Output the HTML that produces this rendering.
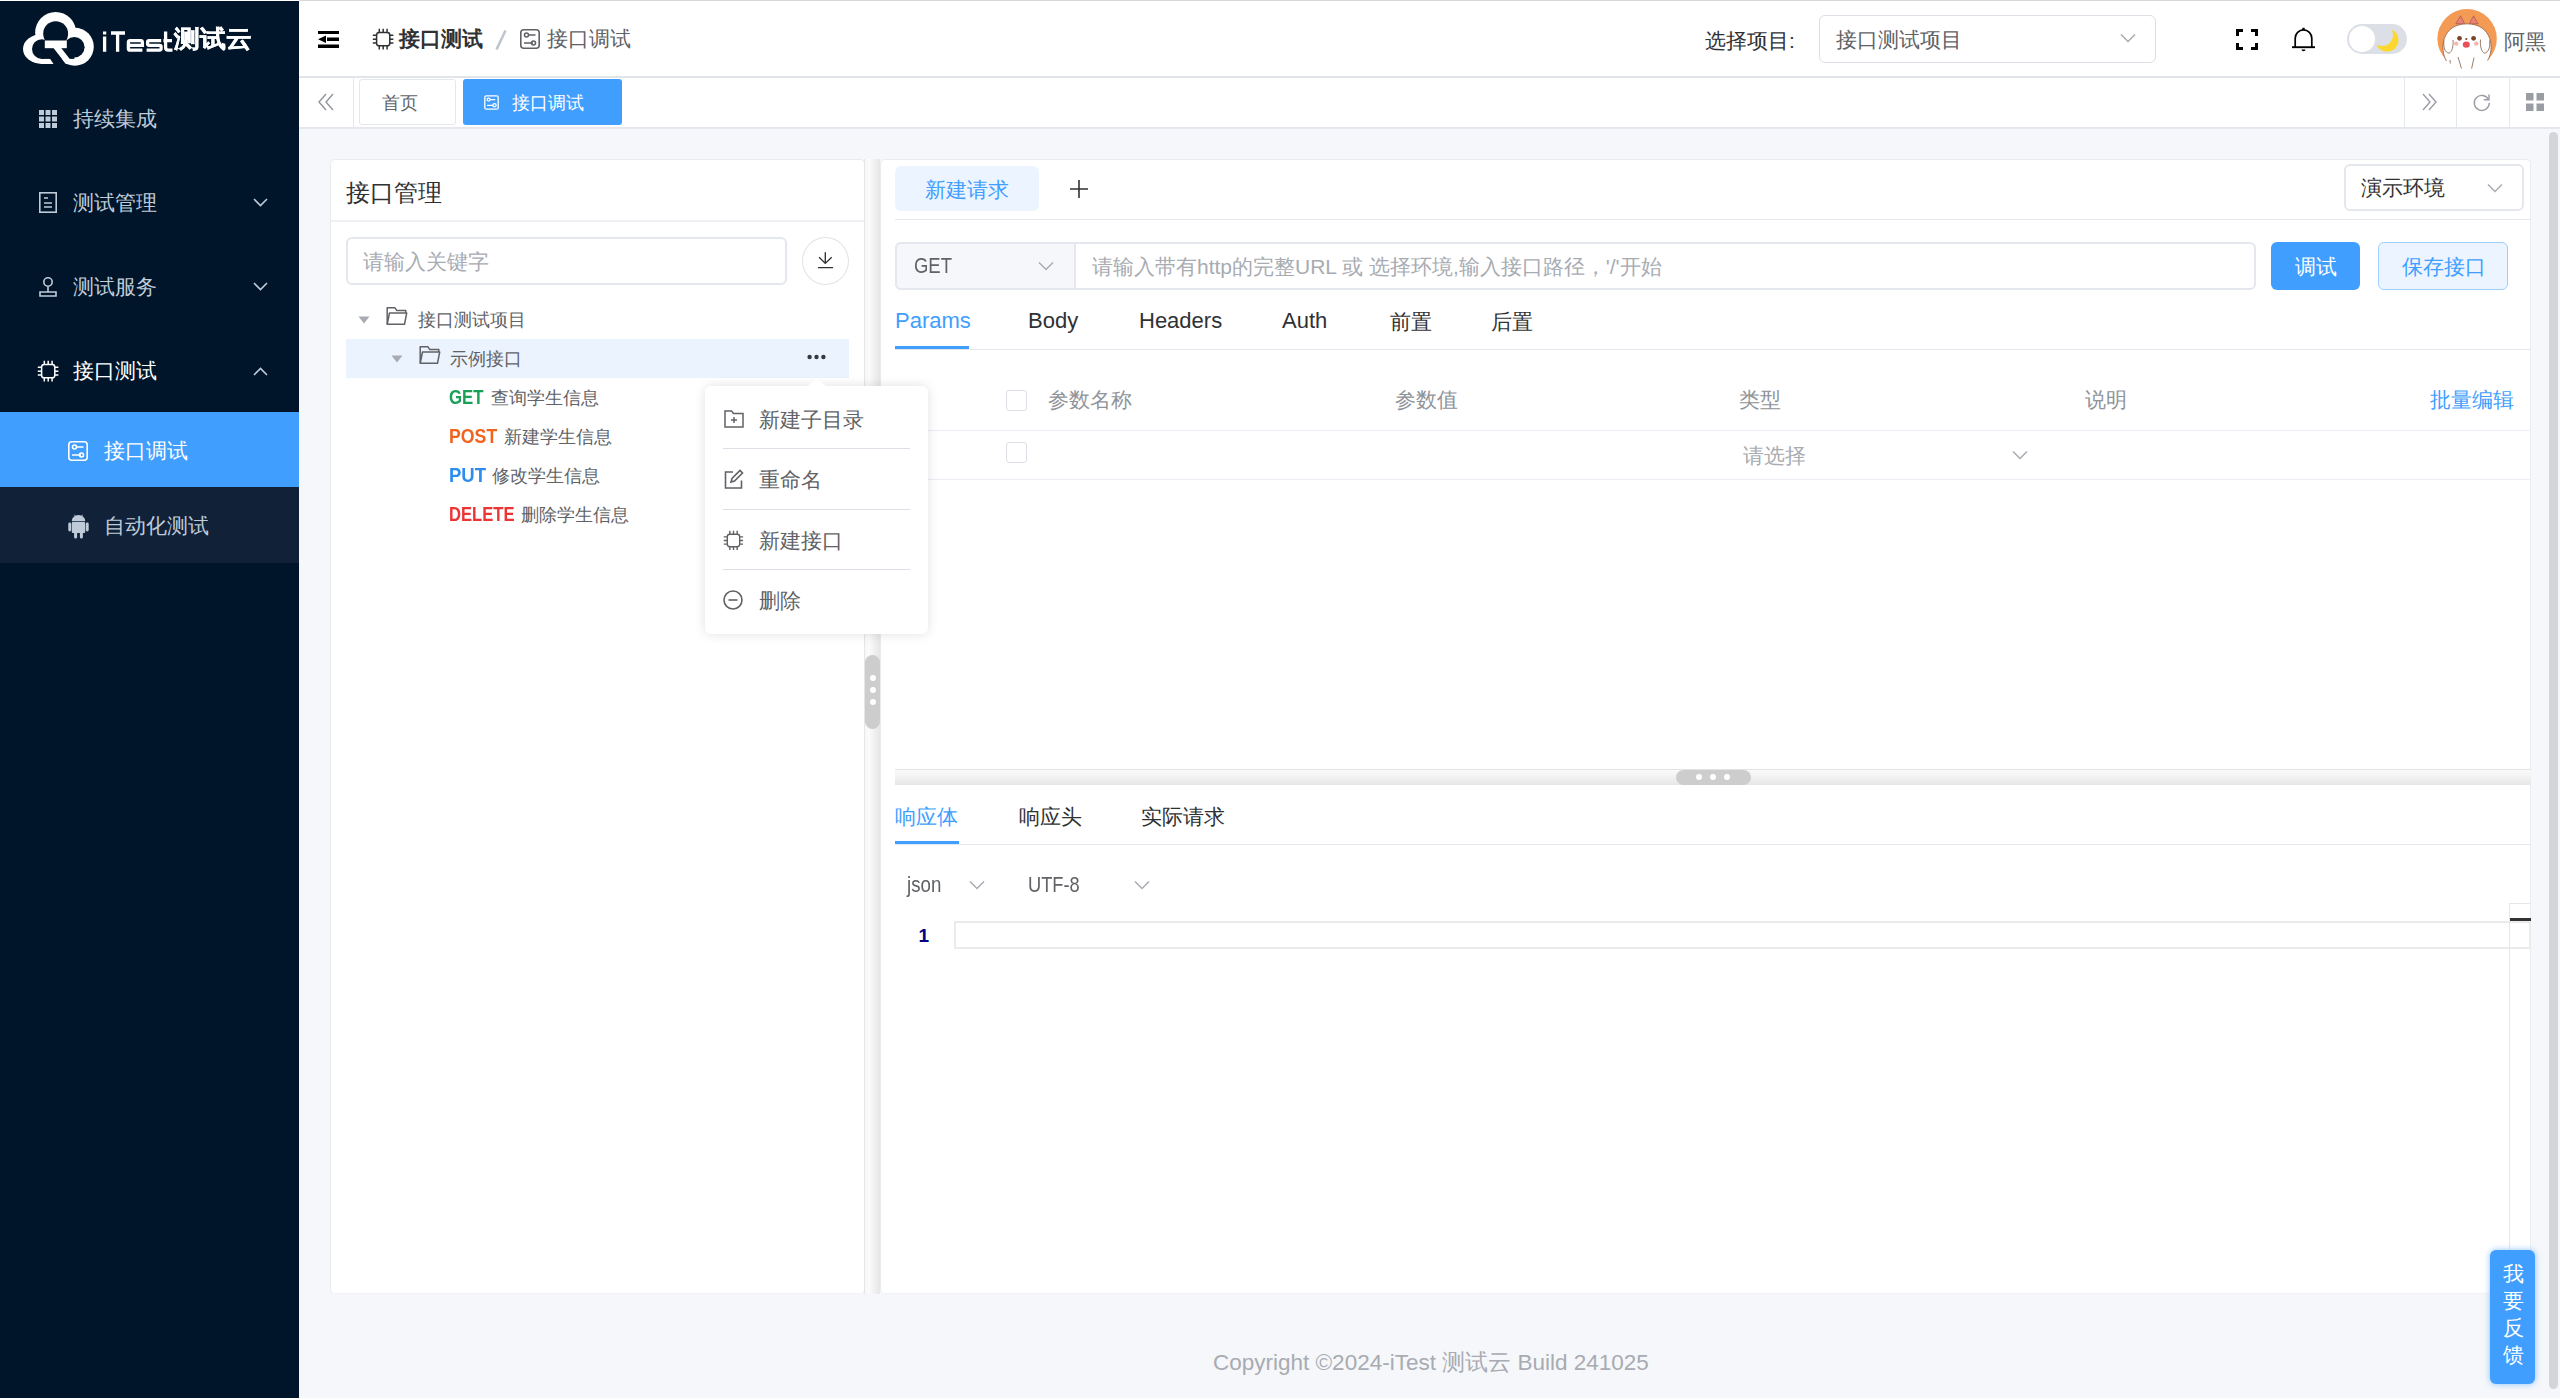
<!DOCTYPE html>
<html><head><meta charset="utf-8">
<style>
*{margin:0;padding:0;box-sizing:border-box}
html,body{width:2560px;height:1398px;overflow:hidden;background:#f5f7fa;font-family:"Liberation Sans",sans-serif;color:#303133}
.abs{position:absolute}
.t{position:absolute;white-space:nowrap;line-height:1}
svg{position:absolute;overflow:visible}
#side{position:absolute;left:0;top:1px;width:299px;height:1397px;background:#001529}
#topline{position:absolute;left:0;top:0;width:2560px;height:1px;background:#fff}
#topline2{position:absolute;left:299px;top:0;width:2261px;height:1px;background:#d8d8d8}
#header{position:absolute;left:299px;top:1px;width:2261px;height:77px;background:#fff;border-bottom:2px solid #e1e4e9}
#tags{position:absolute;left:299px;top:78px;width:2261px;height:51px;background:#fff;border-bottom:2px solid #e4e7ed}
.card{position:absolute;background:#fff;border-radius:5px;border:1px solid #e9ebef;border-bottom-color:#f2f3f6}
.menu{color:#bfcbd9;font-size:21px}
</style></head><body>
<div id="topline"></div><div id="topline2"></div>
<div id="side">
  <!-- logo -->
  <svg style="left:0;top:-1px" width="260" height="70" viewBox="0 0 260 70">
    <defs><mask id="lg">
      <circle cx="55.65" cy="32.5" r="20.5" fill="#fff"/>
      <ellipse cx="41.85" cy="49" rx="18.85" ry="15" fill="#fff"/>
      <circle cx="74.8" cy="46.8" r="19" fill="#fff"/>
      <rect x="41" y="50" width="34" height="14" fill="#fff"/>
      <circle cx="55.65" cy="33.65" r="12.45" fill="#000"/>
      <circle cx="41.85" cy="49.05" r="9.85" fill="#000"/>
      <circle cx="74.3" cy="47.3" r="10.3" fill="#000"/>
      <rect x="41.85" y="40.5" width="32.5" height="18.4" fill="#000"/>
      <path d="M49.2 57.5 L61 57.5 L68 67 L55.5 67 Z" fill="#000"/>
      <rect x="44.8" y="40.5" width="22" height="7.7" fill="#fff"/>
      <path d="M53.5 48 L61.2 48 L72.5 62.5 L64.8 62.5 Z" fill="#fff"/>
    </mask></defs>
    <rect x="0" y="0" width="100" height="70" fill="#fff" mask="url(#lg)"/>
    <g fill="none" stroke="#fff" stroke-width="3.3">
      <path d="M104.6 36.5V51.7M111 33H125M117.6 33V51.7"/>
      <path d="M128.4 45.3H142.4V42.3Q142.4 40.6 140.7 40.6H130.1Q128.4 40.6 128.4 42.3V48.4Q128.4 50.1 130.1 50.1H142.4"/>
      <path d="M161.2 40.6H149.1Q147.6 40.6 147.6 42.1V43.8Q147.6 45.3 149.1 45.3H159.6Q161.1 45.3 161.1 46.8V48.6Q161.1 50.1 159.6 50.1H146.6"/>
      <path d="M165.6 31.5V47.5Q165.6 50.1 168.2 50.1H172.5M163.4 40.6H172"/>
    </g>
    <rect x="102.95" y="31.5" width="3.3" height="3" fill="#fff"/>
  </svg>
  <div class="t" style="left:174px;top:26px;font-size:26px;font-weight:bold;color:#fff;-webkit-text-stroke:0.5px #fff;transform:scaleY(0.93);transform-origin:0 0">测试云</div>
  <!-- menu 1 -->
  <svg style="left:39px;top:109px" width="18" height="18" viewBox="0 0 18 18" fill="#bfcbd9">
    <rect x="0" y="0" width="5" height="5"/><rect x="6.5" y="0" width="5" height="5"/><rect x="13" y="0" width="5" height="5"/>
    <rect x="0" y="6.5" width="5" height="5"/><rect x="6.5" y="6.5" width="5" height="5"/><rect x="13" y="6.5" width="5" height="5"/>
    <rect x="0" y="13" width="5" height="5"/><rect x="6.5" y="13" width="5" height="5"/><rect x="13" y="13" width="5" height="5"/>
  </svg>
  <div class="t menu" style="left:73px;top:107px">持续集成</div>
  <!-- menu 2 -->
  <svg style="left:39px;top:191px" width="18" height="21" viewBox="0 0 18 21" fill="none" stroke="#bfcbd9" stroke-width="1.6">
    <rect x="0.8" y="0.8" width="16.4" height="19.4"/><path d="M5 6h4M5 11h8M5 15h8"/>
  </svg>
  <div class="t menu" style="left:73px;top:191px">测试管理</div>
  <svg style="left:253px;top:197px" width="15" height="9" viewBox="0 0 15 9" fill="none" stroke="#bfcbd9" stroke-width="1.6"><path d="M1 1l6.5 6.5L14 1"/></svg>
  <!-- menu 3 -->
  <svg style="left:39px;top:276px" width="18" height="20" viewBox="0 0 18 20" fill="none" stroke="#bfcbd9" stroke-width="1.6">
    <circle cx="9" cy="5" r="4.2"/><path d="M9 9.2v5M1 15h16v4H1z"/>
  </svg>
  <div class="t menu" style="left:73px;top:275px">测试服务</div>
  <svg style="left:253px;top:281px" width="15" height="9" viewBox="0 0 15 9" fill="none" stroke="#bfcbd9" stroke-width="1.6"><path d="M1 1l6.5 6.5L14 1"/></svg>
  <!-- menu 4 -->
  <svg style="left:36.5px;top:358.5px" width="22.4" height="22.4" viewBox="0 0 22.4 22.4" fill="none" stroke="#fff" stroke-width="1.5"><rect x="4.6" y="4.6" width="13.2" height="13.2" rx="2.6"/><path d="M7.3 0.8v3.6M11.2 0.8v3.6M15.1 0.8v3.6M7.3 17.8v3.6M11.2 17.8v3.6M15.1 17.8v3.6M0.8 7.3h3.6M0.8 11.2h3.6M0.8 15.1h3.6M17.8 7.3h3.6M17.8 11.2h3.6M17.8 15.1h3.6"/></svg>
  <div class="t menu" style="left:73px;top:359px;color:#fff">接口测试</div>
  <svg style="left:253px;top:366px" width="15" height="9" viewBox="0 0 15 9" fill="none" stroke="#bfcbd9" stroke-width="1.6"><path d="M1 8l6.5-6.5L14 8"/></svg>
  <!-- submenu -->
  <div class="abs" style="left:0;top:411px;width:299px;height:75px;background:#409eff"></div>
  <svg style="left:68px;top:439.5px" width="20" height="20" viewBox="0 0 20 20" fill="none" stroke="#fff" stroke-width="1.6">
    <rect x="0.8" y="0.8" width="18.4" height="18.4" rx="3"/><circle cx="6.5" cy="6" r="2"/><path d="M8.5 6h7M4 14h9"/><circle cx="13.5" cy="14" r="2"/>
  </svg>
  <div class="t menu" style="left:104px;top:439px;color:#fff">接口调试</div>
  <div class="abs" style="left:0;top:486px;width:299px;height:75.5px;background:#112238"></div>
  <svg style="left:67.5px;top:512.5px" width="21" height="25" viewBox="0 0 21 25" fill="#bfcbd9">
    <path d="M3.8 7.2 A6.7 6.2 0 0 1 17.2 7.2 Z"/><rect x="3.8" y="7.9" width="13.4" height="11.2" rx="1"/><rect x="0.3" y="8.5" width="2.9" height="9" rx="1.45"/><rect x="17.8" y="8.5" width="2.9" height="9" rx="1.45"/><rect x="6.1" y="17" width="3" height="7.6" rx="1.5"/><rect x="11.9" y="17" width="3" height="7.6" rx="1.5"/>
    <path d="M6.5 0.8l1.4 2.4M14.5 0.8l-1.4 2.4" stroke="#bfcbd9" stroke-width="0.9"/>
  </svg>
  <div class="t menu" style="left:104px;top:514px">自动化测试</div>
</div>
<div id="header"></div>
<!-- header content -->
<svg style="left:318px;top:31px" width="21" height="17" viewBox="0 0 21 17" fill="#000">
  <rect x="0" y="0" width="21" height="3"/><rect x="9" y="6.5" width="12" height="3.5"/><rect x="0" y="13.5" width="21" height="3.5"/><path d="M0 8.25 L8 4.5 V12 Z"/>
</svg>
<svg style="left:371.5px;top:27.5px" width="22.4" height="22.4" viewBox="0 0 22.4 22.4" fill="none" stroke="#303133" stroke-width="1.5"><rect x="4.6" y="4.6" width="13.2" height="13.2" rx="2.6"/><path d="M7.3 0.8v3.6M11.2 0.8v3.6M15.1 0.8v3.6M7.3 17.8v3.6M11.2 17.8v3.6M15.1 17.8v3.6M0.8 7.3h3.6M0.8 11.2h3.6M0.8 15.1h3.6M17.8 7.3h3.6M17.8 11.2h3.6M17.8 15.1h3.6"/></svg>
<div class="t" style="left:399px;top:28px;font-size:21px;font-weight:bold;color:#303133">接口测试</div>
<svg style="left:494px;top:29px" width="14" height="22" viewBox="0 0 14 22"><path d="M11.5 1.5 L2.5 20.5" stroke="#c0c4cc" stroke-width="2.6"/></svg>
<svg style="left:520px;top:29px" width="20" height="20" viewBox="0 0 20 20" fill="none" stroke="#606266" stroke-width="1.6">
  <rect x="0.8" y="0.8" width="18.4" height="18.4" rx="3"/><circle cx="6.5" cy="6" r="2"/><path d="M8.5 6h7M4 14h9"/><circle cx="13.5" cy="14" r="2"/>
</svg>
<div class="t" style="left:547px;top:28px;font-size:21px;color:#606266">接口调试</div>
<div class="t" style="left:1705px;top:30px;font-size:21px;color:#303133">选择项目:</div>
<div class="abs" style="left:1819px;top:15px;width:337px;height:48px;border:1px solid #dcdfe6;border-radius:6px;background:#fff"></div>
<div class="t" style="left:1836px;top:29px;font-size:21px;color:#606266">接口测试项目</div>
<svg style="left:2120px;top:33px" width="16" height="10" viewBox="0 0 16 10" fill="none" stroke="#a8abb2" stroke-width="1.5"><path d="M1 1.5l7 7 7-7"/></svg>
<svg style="left:2235.5px;top:29px" width="22" height="21" viewBox="0 0 22 21" fill="none" stroke="#000" stroke-width="3">
  <path d="M1.5 7V1.5H7M15 1.5h5.5V7M20.5 14v5.5H15M7 19.5H1.5V14"/>
</svg>
<svg style="left:2291px;top:26px" width="25" height="27" viewBox="0 0 25 27" fill="none" stroke="#000" stroke-width="1.7">
  <path d="M4.2 21.2V12.2A8.3 8.3 0 0 1 20.8 12.2V21.2"/><path d="M1 21.2H24" stroke-width="1.9"/><rect x="11.3" y="1.8" width="2.4" height="2.4" fill="#000" stroke="none"/><path d="M10.5 23.4A2 1.8 0 0 0 14.5 23.4Z" fill="#000" stroke="none"/>
</svg>
<div class="abs" style="left:2347px;top:24px;width:60px;height:30px;border-radius:15px;background:#dcdfe6"></div>
<div class="abs" style="left:2349px;top:26px;width:26px;height:26px;border-radius:13px;background:#fff"></div>
<svg style="left:2374px;top:27px" width="26" height="26" viewBox="0 0 26 26"><defs><mask id="moon"><rect width="26" height="26" fill="#fff"/><circle cx="8" cy="8" r="11" fill="#000"/></mask></defs><circle cx="13" cy="13" r="11.5" fill="#fcd82f" mask="url(#moon)"/></svg>
<!-- avatar -->
<svg style="left:2430px;top:5px" width="70" height="70" viewBox="0 0 70 70">
  <circle cx="37.1" cy="33.7" r="29.7" fill="#f39a55"/>
  <path d="M16.5 56 C9.5 45 11 19 37 18.8 C63 19 64.5 45 57.6 55.5 L56 66 L18 66 Z" fill="#fff"/>
  <path d="M16.5 56 C9.5 45 11 19 37 18.8 C63 19 64.5 45 57.6 55.5" fill="none" stroke="#9c6a4c" stroke-width="0.9"/>
  <path d="M25.8 18.8 L30.5 10.8 L34.6 18.6 Z M39.4 18.6 L43.6 10.8 L48 18.8 Z" fill="#f07f7a" stroke="#a8604a" stroke-width="0.8"/>
  <circle cx="29.5" cy="33.3" r="2.4" fill="#7a4528"/><circle cx="43.6" cy="33.3" r="2.4" fill="#7a4528"/>
  <circle cx="36.3" cy="34" r="1.1" fill="#7a4528"/>
  <ellipse cx="36.3" cy="39.6" rx="3.5" ry="3.2" fill="#e9505c"/>
  <circle cx="26.3" cy="38.6" r="2.2" fill="#f9b6ad"/><circle cx="46.3" cy="38.6" r="2.2" fill="#f9b6ad"/>
  <g fill="none" stroke="#8f6e5c" stroke-width="0.9">
    <path d="M23 35 C23.5 42 22 47 19 48.2 C15 47.5 13 42 14 35.5"/>
    <path d="M50.5 34.5 C50 42 51.5 47 54.5 48.2 C58.5 47.5 60.5 42 59.5 35.5"/>
    <path d="M28 52 L31.5 63.6 M44 52.6 L41.6 63.6 M20 55 L20.4 58.5"/>
  </g>
</svg>
<div class="t" style="left:2504px;top:31px;font-size:21px;color:#606266">阿黑</div>
<div id="tags"></div>
<!-- tags content -->
<svg style="left:318px;top:93px" width="16" height="18" viewBox="0 0 16 18" fill="none" stroke="#909399" stroke-width="1.4"><path d="M8 1 L1 9 L8 17 M15 1 L8 9 L15 17"/></svg>
<div class="abs" style="left:353px;top:78px;width:1px;height:50px;background:#e4e7ed"></div>
<div class="abs" style="left:359px;top:79px;width:97px;height:46px;border:1px solid #e4e7ed;border-radius:3px;background:#fff"></div>
<div class="t" style="left:382px;top:94px;font-size:18px;color:#606266">首页</div>
<div class="abs" style="left:463px;top:79px;width:159px;height:46px;border-radius:3px;background:#409eff"></div>
<svg style="left:483.5px;top:94.5px" width="15" height="15" viewBox="0 0 15 15" fill="none" stroke="#fff" stroke-width="1.3"><rect x="0.8" y="0.8" width="13.4" height="13.4" rx="1.5"/><circle cx="4.6" cy="4.6" r="1.5"/><path d="M6.1 4.6h5.2M3 10.3h6.2"/><circle cx="10.5" cy="10.3" r="1.6"/></svg>
<div class="t" style="left:512px;top:94px;font-size:18px;color:#fff">接口调试</div>
<div class="abs" style="left:2404px;top:78px;width:1px;height:50px;background:#e4e7ed"></div>
<div class="abs" style="left:2456px;top:78px;width:1px;height:50px;background:#e4e7ed"></div>
<div class="abs" style="left:2509px;top:78px;width:1px;height:50px;background:#e4e7ed"></div>
<svg style="left:2422px;top:93px" width="16" height="18" viewBox="0 0 16 18" fill="none" stroke="#9a9da4" stroke-width="1.4"><path d="M1 1 L8 9 L1 17 M7 1 L14 9 L7 17"/></svg>
<svg style="left:2473px;top:93px" width="18" height="18" viewBox="0 0 18 18" fill="none" stroke="#9a9da4" stroke-width="1.4"><path d="M15.5 6.5 A7.5 7.5 0 1 0 16.3 10"/><path d="M16 1.5 V6.8 H10.8"/></svg>
<svg style="left:2526px;top:93px" width="18" height="18" viewBox="0 0 18 18" fill="#9a9da4"><rect x="0" y="0" width="7.5" height="7.5"/><rect x="10.5" y="0" width="7.5" height="7.5"/><rect x="0" y="10.5" width="7.5" height="7.5"/><rect x="10.5" y="10.5" width="7.5" height="7.5"/></svg>
<!-- scrollbar -->
<div class="abs" style="left:2549px;top:132px;width:9px;height:1257px;border-radius:4.5px;background:#d3d5d9"></div>
<div class="card" style="left:330px;top:159px;width:535px;height:1135px"></div>
<!-- left card content -->
<div class="t" style="left:346px;top:180.5px;font-size:24px;color:#303133">接口管理</div>
<div class="abs" style="left:331px;top:220px;width:533px;height:2px;background:#eef0f3"></div>
<div class="abs" style="left:346px;top:237px;width:441px;height:48px;border:2px solid #e4e7ed;border-radius:6px;background:#fff"></div>
<div class="t" style="left:363px;top:251px;font-size:21px;color:#a8abb2">请输入关键字</div>
<div class="abs" style="left:802px;top:237px;width:47px;height:48px;border:1.5px solid #e3e3e3;border-radius:50%;background:#fff"></div>
<svg style="left:817px;top:251px" width="17" height="18" viewBox="0 0 17 18" fill="none" stroke="#303133" stroke-width="1.35"><path d="M8.3 1.3V12.6M2.1 6.2L8.3 12.4L14.7 6.2M1 16.6H16.1"/></svg>
<!-- tree -->
<svg style="left:357.5px;top:316px" width="12" height="8" viewBox="0 0 12 8"><path d="M0.5 0.5h11L6 7.5z" fill="#a8abb2"/></svg>
<svg style="left:386px;top:307px" width="22" height="19" viewBox="0 0 22 19" fill="none" stroke="#606266" stroke-width="1.5" stroke-linejoin="round"><path d="M1.2 17.3V0.8H9L10.8 3.6H19.8V6"/><path d="M1.2 17.3L3.5 6H20.7L18.5 17.3Z"/></svg>
<div class="t" style="left:418px;top:311px;font-size:18px;color:#606266">接口测试项目</div>
<div class="abs" style="left:346px;top:339px;width:503px;height:39px;background:#ebf3fe"></div>
<svg style="left:390.5px;top:355px" width="12" height="8" viewBox="0 0 12 8"><path d="M0.5 0.5h11L6 7.5z" fill="#a8abb2"/></svg>
<svg style="left:419px;top:346px" width="22" height="19" viewBox="0 0 22 19" fill="none" stroke="#606266" stroke-width="1.5" stroke-linejoin="round"><path d="M1.2 17.3V0.8H9L10.8 3.6H19.8V6"/><path d="M1.2 17.3L3.5 6H20.7L18.5 17.3Z"/></svg>
<div class="t" style="left:450px;top:350px;font-size:18px;color:#606266">示例接口</div>
<svg style="left:807px;top:354px" width="20" height="6" viewBox="0 0 20 6" fill="#35393f"><circle cx="2.6" cy="3" r="2.2"/><circle cx="9.5" cy="3" r="2.2"/><circle cx="16.4" cy="3" r="2.2"/></svg>
<div class="t" style="left:448.5px;top:387.5px;font-size:19.4px;font-weight:bold;color:#18a058;transform:scaleX(0.865);transform-origin:0 0">GET</div>
<div class="t" style="left:491px;top:389px;font-size:18px;color:#606266">查询学生信息</div>
<div class="t" style="left:448.5px;top:426.5px;font-size:19.4px;font-weight:bold;color:#f0641e;transform:scaleX(0.913);transform-origin:0 0">POST</div>
<div class="t" style="left:504px;top:428px;font-size:18px;color:#606266">新建学生信息</div>
<div class="t" style="left:448.5px;top:465.5px;font-size:19.4px;font-weight:bold;color:#2d8cf0;transform:scaleX(0.955);transform-origin:0 0">PUT</div>
<div class="t" style="left:492px;top:467px;font-size:18px;color:#606266">修改学生信息</div>
<div class="t" style="left:448.5px;top:504.5px;font-size:19.4px;font-weight:bold;color:#ed3434;transform:scaleX(0.856);transform-origin:0 0">DELETE</div>
<div class="t" style="left:521px;top:506px;font-size:18px;color:#606266">删除学生信息</div>
<!-- vertical splitter -->
<div class="abs" style="left:864px;top:159px;width:16px;height:1135px;background:linear-gradient(to right,#f6f6f6,#fbfbfb 30%,#e6e6e6)"></div>
<div class="abs" style="left:864px;top:159px;width:1px;height:1135px;background:#e6e6e6"></div>
<div class="abs" style="left:864.5px;top:654.5px;width:15px;height:74px;border-radius:7.5px;background:#cdcdcd"></div>
<div class="abs" style="left:869.5px;top:675px;width:6px;height:6px;border-radius:3px;background:#fff"></div>
<div class="abs" style="left:869.5px;top:686.6px;width:6px;height:6px;border-radius:3px;background:#fff"></div>
<div class="abs" style="left:869.5px;top:698.8px;width:6px;height:6px;border-radius:3px;background:#fff"></div>
<div class="card" style="left:880px;top:159px;width:1651px;height:1135px"></div>
<!-- right card content -->
<div class="abs" style="left:895px;top:166px;width:144px;height:45px;border-radius:6px;background:#ecf5ff"></div>
<div class="t" style="left:925px;top:179px;font-size:21px;color:#409eff">新建请求</div>
<svg style="left:1070px;top:180px" width="18" height="18" viewBox="0 0 18 18" fill="none" stroke="#303133" stroke-width="1.6"><path d="M9 0v18M0 9h18"/></svg>
<div class="abs" style="left:2344px;top:164px;width:180px;height:47px;border:2px solid #e4e7ed;border-radius:6px;background:#fff"></div>
<div class="t" style="left:2361px;top:177px;font-size:21px;color:#303133">演示环境</div>
<svg style="left:2487px;top:183px" width="16" height="10" viewBox="0 0 16 10" fill="none" stroke="#a8abb2" stroke-width="1.5"><path d="M1 1.5l7 7 7-7"/></svg>
<div class="abs" style="left:895px;top:219px;width:1636px;height:1px;background:#e4e7ed"></div>
<!-- url row -->
<div class="abs" style="left:895px;top:242px;width:1361px;height:48px;border:2px solid #e4e7ed;border-radius:6px;background:#fff"></div>
<div class="abs" style="left:895px;top:242px;width:181px;height:48px;border:2px solid #e4e7ed;border-radius:6px 0 0 6px;background:#f5f7fa"></div>
<div class="t" style="left:913.5px;top:254.5px;font-size:22px;color:#606266;transform:scaleX(0.84);transform-origin:0 0">GET</div>
<svg style="left:1038px;top:261px" width="16" height="10" viewBox="0 0 16 10" fill="none" stroke="#a8abb2" stroke-width="1.5"><path d="M1 1.5l7 7 7-7"/></svg>
<div class="t" style="left:1092px;top:256px;font-size:21px;color:#a8abb2">请输入带有http的完整URL 或 选择环境,输入接口路径，'/'开始</div>
<div class="abs" style="left:2271px;top:242px;width:89px;height:48px;border-radius:6px;background:#409eff"></div>
<div class="t" style="left:2295px;top:256px;font-size:21px;color:#fff">调试</div>
<div class="abs" style="left:2378px;top:242px;width:130px;height:48px;border:1px solid #a0cfff;border-radius:6px;background:#ecf5ff"></div>
<div class="t" style="left:2402px;top:256px;font-size:21px;color:#409eff">保存接口</div>
<!-- request tabs -->
<div class="t" style="left:895px;top:310px;font-size:22px;color:#409eff">Params</div>
<div class="t" style="left:1028px;top:310px;font-size:22px;color:#303133">Body</div>
<div class="t" style="left:1139px;top:310px;font-size:22px;color:#303133">Headers</div>
<div class="t" style="left:1282px;top:310px;font-size:22px;color:#303133">Auth</div>
<div class="t" style="left:1390px;top:311px;font-size:21px;color:#303133">前置</div>
<div class="t" style="left:1491px;top:311px;font-size:21px;color:#303133">后置</div>
<div class="abs" style="left:895px;top:348.5px;width:1636px;height:1.5px;background:#e4e7ed"></div>
<div class="abs" style="left:895px;top:346px;width:74px;height:3px;background:#409eff"></div>
<!-- params table -->
<div class="abs" style="left:1006px;top:390px;width:21px;height:21px;border:1px solid #dcdfe6;border-radius:3px;background:#fff"></div>
<div class="t" style="left:1048px;top:389px;font-size:21px;color:#909399">参数名称</div>
<div class="t" style="left:1395px;top:389px;font-size:21px;color:#909399">参数值</div>
<div class="t" style="left:1739px;top:389px;font-size:21px;color:#909399">类型</div>
<div class="t" style="left:2085px;top:389px;font-size:21px;color:#909399">说明</div>
<div class="t" style="left:2430px;top:389px;font-size:21px;color:#409eff">批量编辑</div>
<div class="abs" style="left:895px;top:430px;width:1636px;height:1px;background:#ebeef5"></div>
<div class="abs" style="left:1006px;top:442px;width:21px;height:21px;border:1px solid #dcdfe6;border-radius:3px;background:#fff"></div>
<div class="t" style="left:1743px;top:445px;font-size:21px;color:#a8abb2">请选择</div>
<svg style="left:2012px;top:450px" width="16" height="10" viewBox="0 0 16 10" fill="none" stroke="#a8abb2" stroke-width="1.5"><path d="M1 1.5l7 7 7-7"/></svg>
<div class="abs" style="left:895px;top:479px;width:1636px;height:1px;background:#ebeef5"></div>
<!-- horizontal splitter -->
<div class="abs" style="left:895px;top:769px;width:1636px;height:16px;background:linear-gradient(#fbfbfb,#f4f4f4 40%,#e6e6e6)"></div>
<div class="abs" style="left:895px;top:769px;width:1636px;height:1px;background:#e3e3e3"></div>
<div class="abs" style="left:1676px;top:769.5px;width:75px;height:15px;border-radius:7.5px;background:#cdcdcd"></div>
<div class="abs" style="left:1695.6px;top:774.3px;width:6px;height:6px;border-radius:3px;background:#fff"></div>
<div class="abs" style="left:1709.9px;top:774.3px;width:6px;height:6px;border-radius:3px;background:#fff"></div>
<div class="abs" style="left:1724.3px;top:774.3px;width:6px;height:6px;border-radius:3px;background:#fff"></div>
<!-- response tabs -->
<div class="t" style="left:895px;top:806px;font-size:21px;color:#409eff">响应体</div>
<div class="t" style="left:1019px;top:806px;font-size:21px;color:#303133">响应头</div>
<div class="t" style="left:1141px;top:806px;font-size:21px;color:#303133">实际请求</div>
<div class="abs" style="left:895px;top:843.5px;width:1636px;height:1.5px;background:#e4e7ed"></div>
<div class="abs" style="left:895px;top:841px;width:64px;height:3px;background:#409eff"></div>
<div class="t" style="left:907px;top:875px;font-size:21.5px;color:#606266;transform:scaleX(0.87);transform-origin:0 0">json</div>
<svg style="left:969px;top:880px" width="16" height="10" viewBox="0 0 16 10" fill="none" stroke="#a8abb2" stroke-width="1.5"><path d="M1 1.5l7 7 7-7"/></svg>
<div class="t" style="left:1027.5px;top:875px;font-size:21.5px;color:#606266;transform:scaleX(0.85);transform-origin:0 0">UTF-8</div>
<svg style="left:1134px;top:880px" width="16" height="10" viewBox="0 0 16 10" fill="none" stroke="#a8abb2" stroke-width="1.5"><path d="M1 1.5l7 7 7-7"/></svg>
<!-- editor -->
<div class="t" style="left:918.5px;top:926px;font-size:19px;font-weight:bold;color:#000080">1</div>
<div class="abs" style="left:954px;top:921px;width:1577px;height:28px;border:2px solid #ebebeb"></div>
<div class="abs" style="left:2509px;top:903px;width:1px;height:346px;background:#e6e6e6"></div>
<div class="abs" style="left:2509px;top:903px;width:22px;height:1px;background:#e6e6e6"></div>
<div class="abs" style="left:2510px;top:918px;width:21px;height:3px;background:#333"></div>
<div class="t" style="left:1213px;top:1352px;font-size:22.5px;color:#a8abb2">Copyright ©2024-iTest 测试云 Build 241025</div>
<div class="abs" style="left:2490px;top:1250px;width:45px;height:134px;border-radius:6px;background:#409eff;box-shadow:0 0 6px rgba(64,158,255,0.6)"></div>
<div class="abs" style="left:2501px;top:1260px;width:24px;font-size:21px;line-height:27px;color:#fff;text-align:center">我要反馈</div>
<!-- context menu -->
<div class="abs" style="left:705px;top:386px;width:223px;height:248px;background:#fff;border-radius:6px;box-shadow:0 0 12px rgba(0,0,0,0.12)"></div>
<svg style="left:806px;top:377.5px" width="22" height="10" viewBox="0 0 22 10"><path d="M0 9.5 L10.8 0.3 L21.6 9.5 Z" fill="#fff"/></svg>
<svg style="left:724px;top:410px" width="20" height="18" viewBox="0 0 20 18" fill="none" stroke="#606266" stroke-width="1.5"><path d="M1 17V1h6.5l2 2.5H19V17z M10 7v6M7 10h6"/></svg>
<div class="t" style="left:759px;top:409px;font-size:21px;color:#606266">新建子目录</div>
<div class="abs" style="left:723px;top:448px;width:187px;height:1px;background:#dcdfe6"></div>
<svg style="left:724px;top:470px" width="20" height="19" viewBox="0 0 20 19" fill="none" stroke="#606266" stroke-width="1.6"><path d="M9 2H1.5v16h16V10.5"/><path d="M7 12l1-3.5 8-8 2.5 2.5-8 8z"/></svg>
<div class="t" style="left:759px;top:469px;font-size:21px;color:#606266">重命名</div>
<div class="abs" style="left:723px;top:509px;width:187px;height:1px;background:#dcdfe6"></div>
<svg style="left:722.5px;top:529.5px" width="21" height="21" viewBox="0 0 22.4 22.4" fill="none" stroke="#606266" stroke-width="1.5"><rect x="4.6" y="4.6" width="13.2" height="13.2" rx="2.6"/><path d="M7.3 0.8v3.6M11.2 0.8v3.6M15.1 0.8v3.6M7.3 17.8v3.6M11.2 17.8v3.6M15.1 17.8v3.6M0.8 7.3h3.6M0.8 11.2h3.6M0.8 15.1h3.6M17.8 7.3h3.6M17.8 11.2h3.6M17.8 15.1h3.6"/></svg>
<div class="t" style="left:759px;top:530px;font-size:21px;color:#606266">新建接口</div>
<div class="abs" style="left:723px;top:569px;width:187px;height:1px;background:#dcdfe6"></div>
<svg style="left:723px;top:590px" width="20" height="20" viewBox="0 0 20 20" fill="none" stroke="#606266" stroke-width="1.6"><circle cx="10" cy="10" r="9"/><path d="M5.5 10h9"/></svg>
<div class="t" style="left:759px;top:590px;font-size:21px;color:#606266">删除</div>
</body></html>
